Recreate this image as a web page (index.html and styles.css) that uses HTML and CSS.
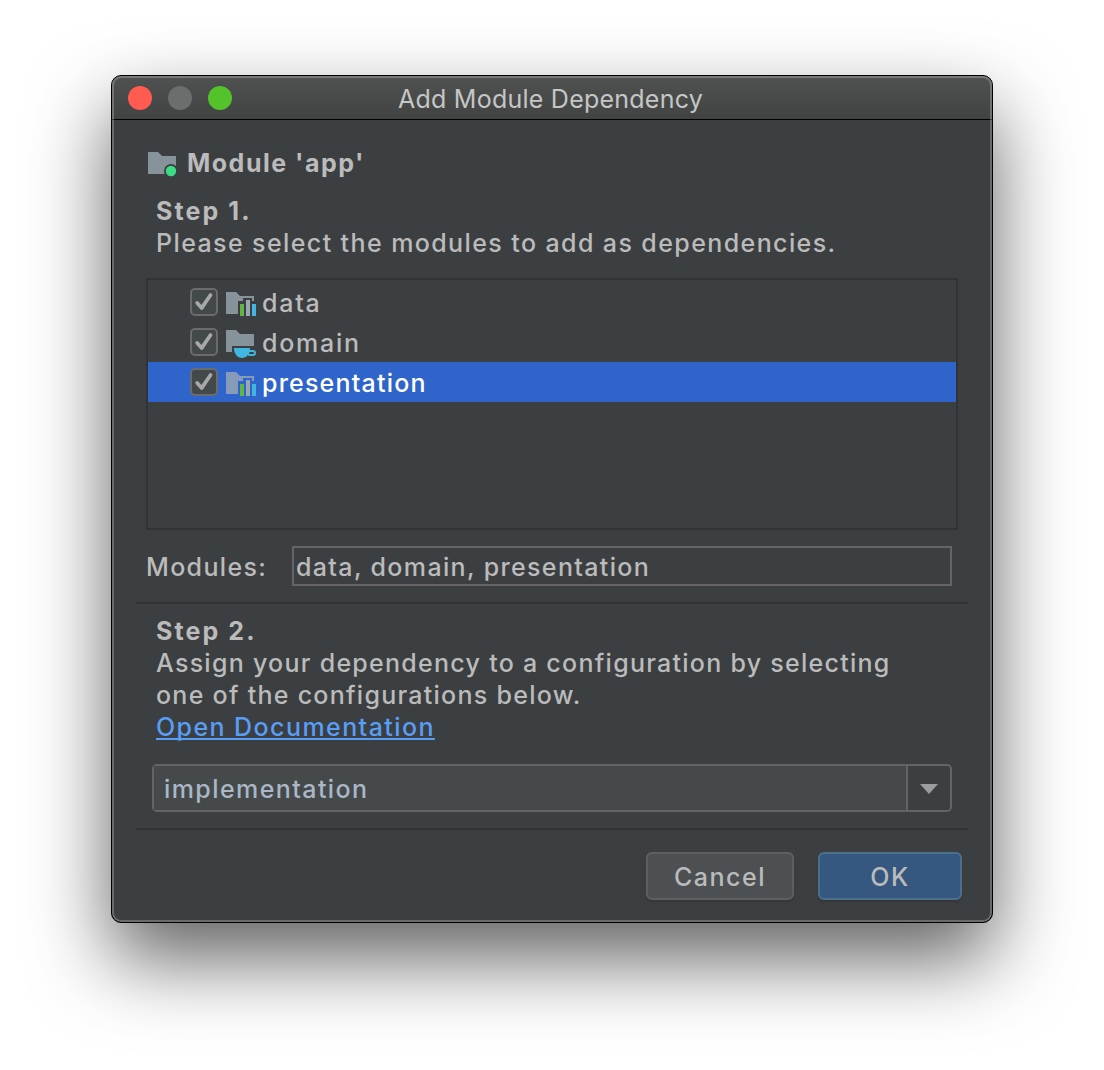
FILE: index.html
```html
<!DOCTYPE html>
<html lang="en">
<head>
    <meta charset="UTF-8">
    <meta name="viewport" content="width=device-width, initial-scale=1.0">
    <title>Add Module Dependency</title>
    <link rel="stylesheet" href="styles.css">
</head>
<body>
    <div class="window">
        <div class="titlebar">
            <div class="lights">
                <span class="light red"></span>
                <span class="light gray"></span>
                <span class="light green"></span>
            </div>
            <div class="title">Add Module Dependency</div>
        </div>
        <div class="content">
            <div class="module">
                <svg class="module-icon" width="30" height="26" viewBox="0 0 30 26">
                    <path fill="#87939a" d="M0 0h10l4 4h14v18H0z"/>
                    <circle cx="23" cy="19" r="7" fill="#3c3f41"/>
                    <circle cx="23" cy="19" r="5.2" fill="#3ddc84"/>
                </svg>
                <span>Module 'app'</span>
            </div>
            <div class="step step1">
                <b>Step 1.</b>
                <p class="hint">Please select the modules to add as dependencies.</p>
            </div>
            <div class="list">
                <div class="row">
                    <span class="check"><svg width="24" height="24" viewBox="0 0 24 24"><path d="M5.200 13l4.500 5 8.800-13"/></svg></span>
                    <svg class="icon" width="30" height="26" viewBox="0 0 30 26">
                        <path class="folder" d="M0 1h10l4 4h14v5h-2V7h-9v3h-5v13H0z"/>
                        <path fill="#62b543" d="M14 13h4v12h-4z"/>
                        <path fill="#9aa7b0" d="M20 9h4v16h-4z"/>
                        <path fill="#40b6e0" d="M26 13h4v12h-4z"/>
                    </svg>
                    <span class="name">data</span>
                </div>
                <div class="row">
                    <span class="check"><svg width="24" height="24" viewBox="0 0 24 24"><path d="M5.200 13l4.500 5 8.800-13"/></svg></span>
                    <svg class="icon cup" width="30" height="28" viewBox="0 0 30 28">
                        <path class="folder" d="M0 0h10l4 4h14v12H6v6H0z"/>
                        <path fill="#40b6e0" d="M8 18h16c0 6-3.500 10-8 10s-8-4-8-10z"/>
                        <rect x="22" y="21" width="7" height="4" rx="2" fill="none" stroke="#40b6e0" stroke-width="2"/>
                    </svg>
                    <span class="name">domain</span>
                </div>
                <div class="row selected">
                    <span class="check"><svg width="24" height="24" viewBox="0 0 24 24"><path d="M5.200 13l4.500 5 8.800-13"/></svg></span>
                    <svg class="icon" width="30" height="26" viewBox="0 0 30 26">
                        <path class="folder" d="M0 1h10l4 4h14v5h-2V7h-9v3h-5v13H0z"/>
                        <path fill="#62b543" d="M14 13h4v12h-4z"/>
                        <path fill="#9aa7b0" d="M20 9h4v16h-4z"/>
                        <path fill="#40b6e0" d="M26 13h4v12h-4z"/>
                    </svg>
                    <span class="name">presentation</span>
                </div>
            </div>
            <div class="modules">
                <span class="label">Modules:</span>
                <div class="field">data, domain, presentation</div>
            </div>
            <div class="line"></div>
            <div class="step step2">
                <b>Step 2.</b>
                <p>Assign your dependency to a configuration by selecting<br>one of the configurations below.</p>
                <a class="link" href="#">Open Documentation</a>
            </div>
            <div class="combo">
                <span class="value">implementation</span>
                <span class="arrow"><svg width="18" height="10" viewBox="0 0 18 10"><path fill="#9b9da0" d="M0 0h18L9 10z"/></svg></span>
            </div>
            <div class="line"></div>
            <div class="buttons">
                <button type="button" class="butn cancel">Cancel</button>
                <button type="button" class="butn ok">OK</button>
            </div>
        </div>
    </div>
</body>
</html>
```
FILE: styles.css
```css
* {
    box-sizing: border-box;
}
body {
    margin: 0;
    height: 1070px;
    padding: 75px 111px;
    background: #fff;
    font-family: Inter, sans-serif;
    font-size: 25px;
    font-weight: 450;
    letter-spacing: 1.35px;
    line-height: 32px;
    color: #bbb;
    overflow: hidden;
}
p {
    margin: 0;
    letter-spacing: 1.27px;
}
.window {
    position: relative;
    width: 882px;
    height: 848px;
    border: 1px solid #000;
    border-radius: 10px;
    background: #3c3f41;
    box-shadow: 0 36px 80px rgba(0, 0, 0, 0.62);
    overflow: hidden;
}
/* light rim inside the black window edge */
.window::after {
    content: "";
    position: absolute;
    inset: 0;
    border: 2px solid rgba(255, 255, 255, 0.23);
    border-radius: 9px;
    pointer-events: none;
}
.titlebar {
    display: flex;
    align-items: center;
    height: 44px;
    padding-left: 16px;
    background: linear-gradient(#505251, #414342);
    border-bottom: 1px solid #000;
}
.lights {
    display: flex;
    gap: 16px;
    width: 104px;
}
.light {
    width: 24px;
    height: 24px;
    border-radius: 50%;
}
.red {
    background: #ff5b50;
}
.gray {
    background: #6c6e6d;
}
.green {
    background: #54c22b;
}
.title {
    flex: 1;
    margin-right: 123px;
    padding-top: 2px;
    text-align: center;
    font-weight: 400;
    letter-spacing: 0.24px;
    color: #c5c6c6;
}
.content {
    padding: 26px 24px 0;
}
.module {
    display: flex;
    align-items: center;
    gap: 9px;
    height: 34px;
    padding-left: 12px;
    font-weight: 700;
    letter-spacing: 1.5px;
}
.module-icon {
    margin-top: 4px;
}
.step {
    padding-left: 20px;
}
.step b {
    display: block;
    font-weight: 700;
    letter-spacing: 2.1px;
}
.step .hint {
    letter-spacing: 1.4px;
}
.step1 {
    margin-top: 15px;
}
.list {
    height: 252px;
    margin: 19px 10px 0;
    padding-top: 2px;
    border: 2px solid #323334;
}
.row {
    display: flex;
    align-items: center;
    height: 40px;
    padding-left: 42px;
    letter-spacing: 1.75px;
}
.name {
    padding-top: 2px;
}
.selected {
    background: #2f65ca;
    color: #fff;
    letter-spacing: 1.2px;
}
.check {
    width: 28px;
    height: 28px;
    margin-right: 8px;
    border: 2px solid #6b6b6b;
    border-radius: 5px;
    background: #43494a;
}
.check svg {
    display: block;
    fill: none;
    stroke: #a7a7a7;
    stroke-width: 3.8;
    stroke-linecap: round;
    stroke-linejoin: round;
}
.icon {
    margin-right: 6px;
    margin-top: 3px;
}
.cup {
    margin-top: 4px;
}
.folder {
    fill: #87939a;
}
.selected .folder {
    fill: #869ab9;
}
.modules {
    display: flex;
    align-items: center;
    margin: 16px 16px 16px 10px;
}
.label {
    width: 146px;
    padding-top: 2px;
}
.field {
    flex: 1;
    height: 40px;
    padding: 3px 2px;
    border: 2px solid #646464;
}
.line {
    height: 2px;
    background: #323334;
}
.step2 {
    margin-top: 11px;
}
.link {
    color: #589df6;
    letter-spacing: 1.42px;
    text-decoration-thickness: 2px;
    text-underline-offset: 2px;
    text-decoration-skip-ink: none;
}
.combo {
    display: flex;
    height: 48px;
    margin: 21px 16px 16px;
    border: 2px solid #646464;
    border-radius: 5px;
}
.value {
    flex: 1;
    padding: 7px 10px 5px;
    background: #45494a;
    color: #a9b7c6;
    letter-spacing: 1.42px;
}
.arrow {
    display: flex;
    align-items: center;
    justify-content: center;
    width: 44px;
    padding-top: 1px;
    border-left: 2px solid #646464;
}
.buttons {
    display: flex;
    justify-content: flex-end;
    gap: 24px;
    padding: 22px 6px 0 0;
}
.butn {
    height: 48px;
    padding: 2px 0 0;
    font: inherit;
    letter-spacing: 1.5px;
    color: #bbb;
    border: 2px solid #5e6060;
    border-radius: 6px;
    background: #4c5052;
    box-shadow: 0 2px 2px #353739;
}
.cancel {
    width: 148px;
}
.ok {
    width: 144px;
    background: #365880;
    border-color: #4c708c;
}
```
